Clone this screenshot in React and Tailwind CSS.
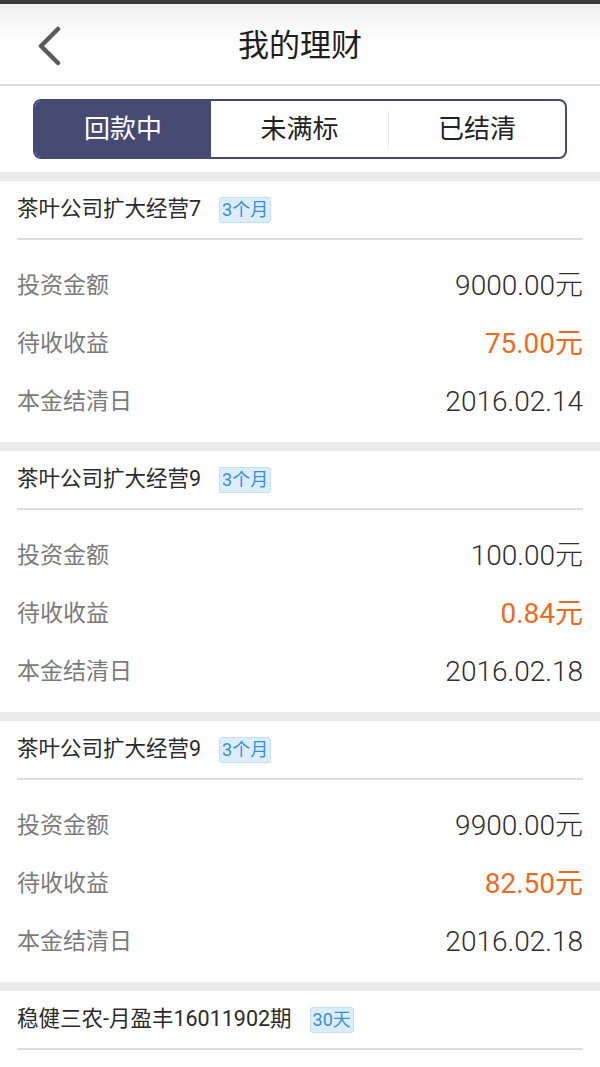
import React, { useState } from "react";

const font = { fontFamily: '"Roboto", "Noto Sans CJK SC", sans-serif' };

const items = [
    { name: "茶叶公司扩大经营7", term: "3个月", amount: "9000.00元", income: "75.00元", date: "2016.02.14" },
    { name: "茶叶公司扩大经营9", term: "3个月", amount: "100.00元", income: "0.84元", date: "2016.02.18" },
    { name: "茶叶公司扩大经营9", term: "3个月", amount: "9900.00元", income: "82.50元", date: "2016.02.18" },
    { name: "稳健三农-月盈丰16011902期", term: "30天" },
];

const tabs = ["回款中", "未满标", "已结清"];

const Row = ({ label, value, orange }) => (
    <div className="flex items-center justify-between h-[58px]">
        <span className="text-[23px] text-[#7a7a7a]">{label}</span>
        <span className={`text-[28px] font-light ${orange ? "text-[#ec6a22] font-normal" : "text-[#2e2e2e]"}`}>{value}</span>
    </div>
);

const Card = ({ item }) => (
    <div className="bg-white px-[17px] h-[261px] mb-[9px]">
        <div className="flex items-center h-[59px] border-b-2 border-[#dedede]">
            <span className="text-[21.5px] text-[#2a2a2a]">{item.name}</span>
            <span className="ml-[18px] px-[2px] text-[18px] leading-[24px] text-[#3a8fd4] bg-[#dcedfa] border border-[#c2dff4] rounded-[3px]">
                {item.term}
            </span>
        </div>
        {item.amount && (
            <div className="pt-[17px]">
                <Row label="投资金额" value={item.amount} />
                <Row label="待收收益" value={item.income} orange />
                <Row label="本金结清日" value={item.date} />
            </div>
        )}
    </div>
);

export default function App() {
    const [active, setActive] = useState(0);

    return (
        <div style={font} className="w-[600px] h-[1067px] overflow-hidden bg-[#ebebeb]">
            <div className="h-[4px] bg-[#3a3a3a]"></div>
            {/* Header */}
            <div className="relative h-[82px] flex items-center justify-center bg-gradient-to-b from-[#f0f0f0] via-white to-white border-b-2 border-[#dcdcdc]">
                <svg className="absolute left-[36px] top-[22px]" width="26" height="40" viewBox="0 0 26 40">
                    <path d="M22 3 L5 20 L22 37" fill="none" stroke="#5a5a5a" strokeWidth="4.5" strokeLinecap="round" strokeLinejoin="round" />
                </svg>
                <span className="text-[31px] text-[#1e1e1e] pt-[4px]">我的理财</span>
            </div>
            {/* Tabs */}
            <div className="bg-white h-[86px] pt-[13px]">
                <div className="mx-[33px] h-[60px] flex border-2 border-[#464a73] rounded-[8px] overflow-hidden">
                    {tabs.map((t, i) => (
                        <div
                            key={t}
                            onClick={() => setActive(i)}
                            className={`flex items-center justify-center text-[26px] ${i === 0 ? "w-[176px]" : "flex-1"} ${
                                active === i ? "bg-[#464a73] text-white" : "text-[#222]"
                            }`}
                        >
                            {i === 2 && <div className="w-[1px] h-[36px] bg-[#e4e4e4] mr-auto"></div>}
                            <span className={i === 2 ? "mr-auto" : ""}>{t}</span>
                        </div>
                    ))}
                </div>
            </div>
            <div className="pt-[9px]">
                {items.map((item, i) => (
                    <Card key={i} item={item} />
                ))}
            </div>
        </div>
    );
}
